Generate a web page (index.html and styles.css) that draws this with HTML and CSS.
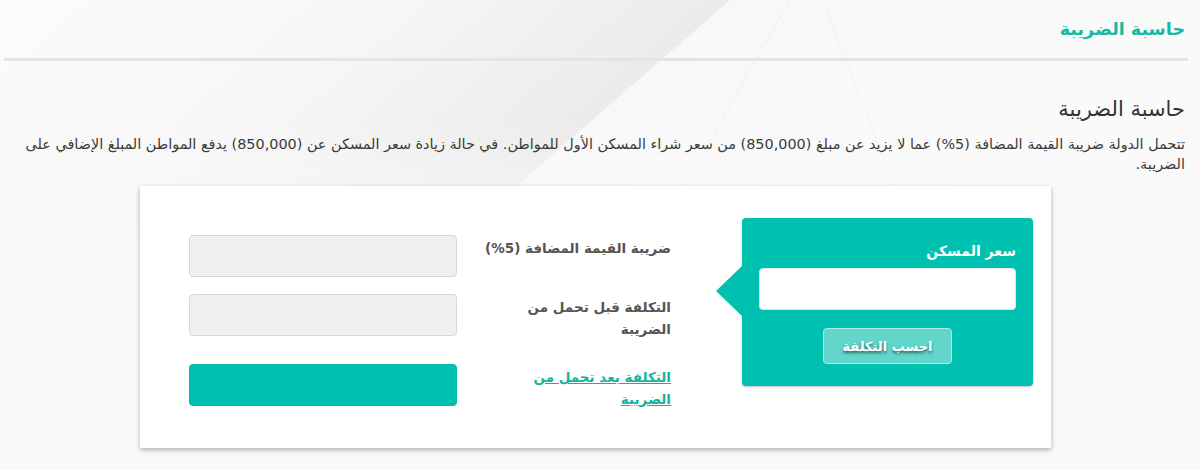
FILE: index.html
```html
<!DOCTYPE html>
<html lang="ar" dir="rtl">
<head>
<meta charset="utf-8">
<title>حاسبة الضريبة</title>
<link rel="stylesheet" href="styles.css">
</head>
<body>
<div class="page">
  <header class="top">
    <h1 class="top-title">حاسبة الضريبة</h1>
  </header>
  <section class="intro">
    <h2 class="intro-title">حاسبة الضريبة</h2>
    <p class="intro-text">تتحمل الدولة ضريبة القيمة المضافة (5%) عما لا يزيد عن مبلغ (850,000) من سعر شراء المسكن الأول للمواطن. في حالة زيادة سعر المسكن عن (850,000) يدفع المواطن المبلغ الإضافي على الضريبة.</p>
  </section>
  <div class="card">
    <div class="price-box">
      <label class="price-label">سعر المسكن</label>
      <input class="price-input" type="text">
      <div class="btn-row"><button class="calc-btn">احسب التكلفة</button></div>
    </div>
    <div class="results">
      <div class="res-label">ضريبة القيمة المضافة (5%)</div>
      <div class="res-field"></div>
      <div class="res-label">التكلفة قبل تحمل من<br>الضريبة</div>
      <div class="res-field"></div>
      <a class="res-label res-link" href="#">التكلفة بعد تحمل من<br>الضريبة</a>
      <div class="res-field res-total"></div>
    </div>
  </div>
</div>
</body>
</html>
```
FILE: styles.css
```css
html, body {
  margin: 0;
  padding: 0;
}
body {
  width: 1200px;
  height: 470px;
  overflow: hidden;
  font-family: "DejaVu Sans", "Noto Sans", sans-serif;
  color: #333;
  background-color: #fafafa;
  background-image:
    linear-gradient(to bottom, rgba(250, 250, 250, 0) 120px, #fafafa 260px),
    linear-gradient(119.5deg, transparent 687px, rgba(0, 0, 0, 0.03) 687px, rgba(0, 0, 0, 0.03) 688px, transparent 688px),
    linear-gradient(69deg, transparent 936px, rgba(0, 0, 0, 0.03) 936px, rgba(0, 0, 0, 0.03) 937px, transparent 937px),
    linear-gradient(139deg, #fbfbfb 0%, #f7f7f7 22%, #ebebeb 41.9%, #f8f8f8 42%, #fafafa 70%, #f9f9f9 100%);
}
.page {
  padding: 0 15px 0 25px;
}
.top {
  margin: 0 -3px 0 -21px;
  height: 58px;
  border-bottom: 3px solid #e4e4e4;
  display: flex;
  align-items: center;
}
.top-title {
  margin: 0 3px 0 0;
  font-size: 17.5px;
  font-weight: bold;
  color: #16b9a4;
}
.intro {
  padding-top: 33px;
}
.intro-title {
  margin: 0;
  font-size: 21px;
  font-weight: normal;
  line-height: 30px;
  color: #333;
}
.intro-text {
  margin: 10px 0 0;
  font-size: 14.4px;
  line-height: 20px;
  color: #3a3a3a;
}
.card {
  width: 911px;
  height: 262px;
  box-sizing: border-box;
  margin: 12px auto 0 115px;
  background: #fff;
  box-shadow: 0 2px 5px rgba(0, 0, 0, 0.3);
  padding: 32px 18px 0 49px;
  display: flex;
  align-items: flex-start;
}
.price-box {
  position: relative;
  width: 291px;
  height: 168px;
  box-sizing: border-box;
  background: #00c1b0;
  border-radius: 4px;
  box-shadow: 0 1px 2px rgba(0, 0, 0, 0.25);
  padding: 23px 17px 0;
  margin-left: 71px;
  display: flex;
  flex-direction: column;
}
.price-box::after {
  content: "";
  position: absolute;
  left: -26px;
  top: 48px;
  border-style: solid;
  border-width: 25px 26px 25px 0;
  border-color: transparent #00c1b0 transparent transparent;
}
.price-label {
  display: block;
  font-size: 14px;
  font-weight: bold;
  line-height: 20px;
  color: #fff;
}
.price-input {
  margin-top: 7px;
  height: 42px;
  box-sizing: border-box;
  border: 1px solid #e6e6e6;
  border-radius: 4px;
  background: #fff;
  width: 100%;
  padding: 0;
}
.btn-row {
  display: flex;
  justify-content: center;
  margin-top: 18px;
}
.calc-btn {
  width: 129px;
  height: 36px;
  box-sizing: border-box;
  background: #62d6cb;
  border: 1px solid #a8ece6;
  border-radius: 4px;
  color: #fff;
  font-family: "DejaVu Sans", sans-serif;
  font-weight: bold;
  font-size: 13px;
  text-shadow: 0 2px 3px rgba(0, 0, 0, 0.55);
  padding: 0;
}
.results {
  margin-top: 17px;
  display: grid;
  grid-template-columns: 194px 268px;
  grid-template-rows: 59px 70px 42px;
  column-gap: 20px;
}
.res-label {
  padding-top: 2px;
  font-size: 13.5px;
  font-weight: bold;
  line-height: 22px;
  color: #555;
}
.res-link {
  color: #14b3a1;
  text-decoration: underline;
}
.res-field {
  height: 42px;
  box-sizing: border-box;
  background: #efefef;
  border: 1px solid #d6d6d6;
  border-radius: 4px;
}
.res-total {
  background: #00c1b0;
  border-color: #00b8a8;
}
```
